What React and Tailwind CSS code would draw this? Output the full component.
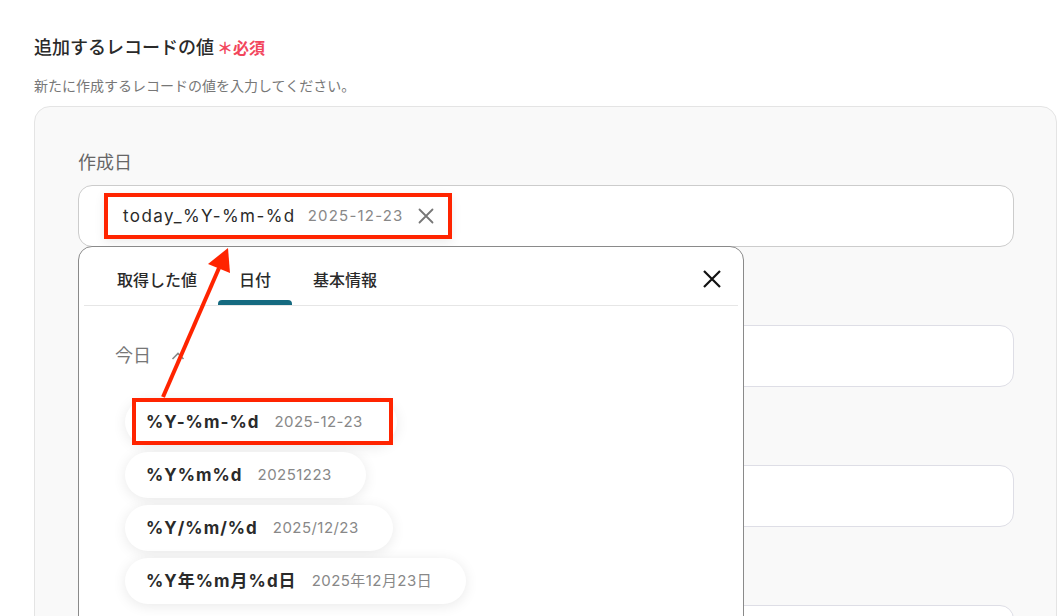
import React from "react";

const items = [
  { fmt: "%Y-%m-%d", val: "2025-12-23", hl: true },
  { fmt: "%Y%m%d", val: "20251223" },
  { fmt: "%Y/%m/%d", val: "2025/12/23" },
  { fmt: "%Y年%m月%d日", val: "2025年12月23日" },
];

function Field({ label, children }) {
  return (
    <div className="flex flex-col">
      <div className="text-[18px] leading-[24px] text-[#666]">{label}</div>
      <div className="mt-[10px] h-[62px] w-[936px] rounded-[14px] border border-[#dedee6] bg-white">
        {children}
      </div>
    </div>
  );
}

export default function App() {
  return (
    <div className="relative h-[616px] w-[1060px] overflow-hidden bg-white pl-[34px] pt-[36px] font-['Inter','Noto_Sans_CJK_JP',sans-serif] text-[#333]">
      <div className="flex items-center">
        <span className="text-[18px] font-medium leading-[24px] text-[#2a2a2a]">追加するレコードの値</span>
        <span className="ml-[3px] text-[16px] font-bold leading-[24px] text-[#f2465c]">＊必須</span>
      </div>
      <p className="mt-[16px] text-[14px] leading-[20px] text-[#777]">新たに作成するレコードの値を入力してください。</p>

      <div className="relative mt-[10px] h-[700px] w-[1023px] rounded-[16px] border border-[#e4e4e4] bg-[#f9f9f9] pl-[43px] pt-[44px]">
        <div className="flex flex-col gap-[44px]">
          <div className="flex flex-col">
            <div className="text-[18px] leading-[24px] text-[#666]">作成日</div>
            <div className="mt-[10px] flex h-[62px] w-[936px] items-center rounded-[14px] border border-[#cccccc] bg-white pl-[25px]">
              <div className="flex h-[46px] items-center border-[4px] border-[#ff2400] bg-white pl-[15px] pr-[14px] shadow-[0_3px_10px_rgba(0,0,0,0.08)]">
                <span className="text-[17px] leading-[24px] tracking-[0.085em] text-[#2a2a2a]">today_%Y-%m-%d</span>
                <span className="ml-[12px] text-[15px] leading-[24px] tracking-[0.08em] text-[#888]">2025-12-23</span>
                <svg className="ml-[14px]" width="16" height="16" viewBox="0 0 16 16">
                  <path d="M1.5 1.5L14.5 14.5M14.5 1.5L1.5 14.5" stroke="#777" strokeWidth="1.8" strokeLinecap="round" />
                </svg>
              </div>
            </div>
          </div>
          <Field label="更新日" />
          <Field label="担当者" />
          <Field label="備考" />
        </div>

        <div className="absolute left-[43px] top-[139px] h-[600px] w-[666px] rounded-t-[14px] border border-[#8a8a8a] bg-white">
          <div className="mx-[5px] flex h-[59px] items-stretch justify-between border-b border-[#e6e6e6] pl-[12px]">
            <div className="flex">
              {["取得した値", "日付", "基本情報"].map((t, i) => (
                <div key={t} className="relative flex h-[58px] items-start px-[21px] pt-[21px]">
                  <span className="text-[16px] font-medium leading-[24px] text-[#2a2a2a]">{t}</span>
                  {i === 1 && (
                    <span className="absolute bottom-0 left-0 right-0 h-[5px] rounded-t-[4px] bg-[#156a80]" />
                  )}
                </div>
              ))}
            </div>
            <div className="flex items-start pr-[16px] pt-[22px]">
              <svg width="20" height="20" viewBox="0 0 20 20">
                <path d="M2 2L18 18M18 2L2 18" stroke="#111" strokeWidth="2.2" />
              </svg>
            </div>
          </div>

          <div className="mt-[38px] flex items-center pl-[36px]">
            <span className="text-[18px] leading-[24px] text-[#777]">今日</span>
            <svg className="ml-[20px]" width="14" height="10" viewBox="0 0 14 10">
              <path d="M1.5 8L7 2.5L12.5 8" fill="none" stroke="#888" strokeWidth="1.6" />
            </svg>
          </div>

          <div className="mt-[31px] flex flex-col items-start gap-[7px] pl-[46px]">
            {items.map((it) => (
              <div
                key={it.fmt}
                className="relative flex h-[46px] items-center rounded-full bg-white pl-[21px] pr-[34px] shadow-[0_2px_14px_rgba(0,0,0,0.09)]"
              >
                <span className="text-[17px] font-bold leading-[24px] tracking-[0.06em] text-[#2a2a2a]">{it.fmt}</span>
                <span className="ml-[15px] text-[15px] leading-[24px] tracking-[0.03em] text-[#888]">{it.val}</span>
                {it.hl && (
                  <span className="absolute bottom-0 left-[7px] right-[4px] top-[-1px] border-[4px] border-[#ff2400]" />
                )}
              </div>
            ))}
          </div>
        </div>
      </div>

      <svg className="pointer-events-none absolute left-0 top-0" width="1060" height="616" viewBox="0 0 1060 616">
        <line x1="163" y1="397" x2="219" y2="268" stroke="#ff2400" strokeWidth="4" />
        <polygon points="228,248 208,264 230,273" fill="#ff2400" />
      </svg>
    </div>
  );
}
